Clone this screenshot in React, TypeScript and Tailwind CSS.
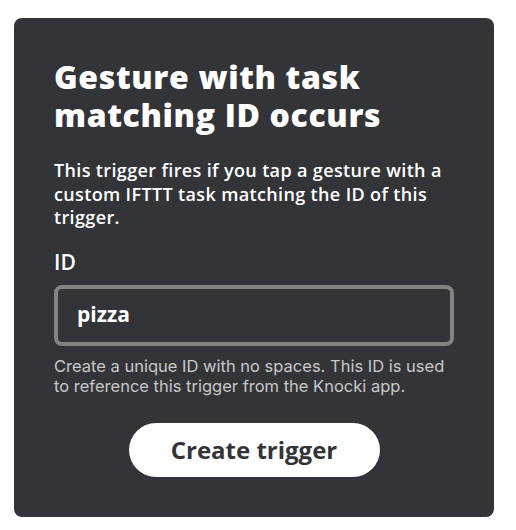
import React from 'react';

export default function App() {
  return (
    <div className="min-h-[530px] bg-white pl-[14px] pt-[18px] font-['Open_Sans',sans-serif]">
      <div className="w-[480px] rounded-[8px] bg-[#333437] px-10 pt-10 pb-10">
        <h1 className="text-[32px] font-extrabold leading-[38px] tracking-[0.02em] text-white">
          Gesture with task matching ID occurs
        </h1>
        <p className="mt-[25px] text-[18px] font-semibold leading-[23.5px] tracking-[0.02em] text-white">
          This trigger fires if you tap a gesture with a custom IFTTT task matching the ID of this trigger.
        </p>

        <label className="mt-[18px] block text-[21px] font-semibold leading-[28px] text-white">ID</label>
        <div className="mt-[9px] flex h-[61px] items-center rounded-[8px] border-4 border-[#838383] px-[19px]">
          <span className="text-[21px] font-bold text-white">pizza</span>
        </div>
        <p className="mt-[10px] font-['Inter',sans-serif] text-[16.5px] leading-[20.5px] text-[#c8c8c8]">
          Create a unique ID with no spaces. This ID is used to reference this trigger from the Knocki app.
        </p>

        <div className="mt-[26px] flex justify-center">
          <button className="h-[54px] w-[251px] rounded-full bg-white text-[24px] font-bold text-[#333437]">
            Create trigger
          </button>
        </div>
      </div>
    </div>
  );
}
